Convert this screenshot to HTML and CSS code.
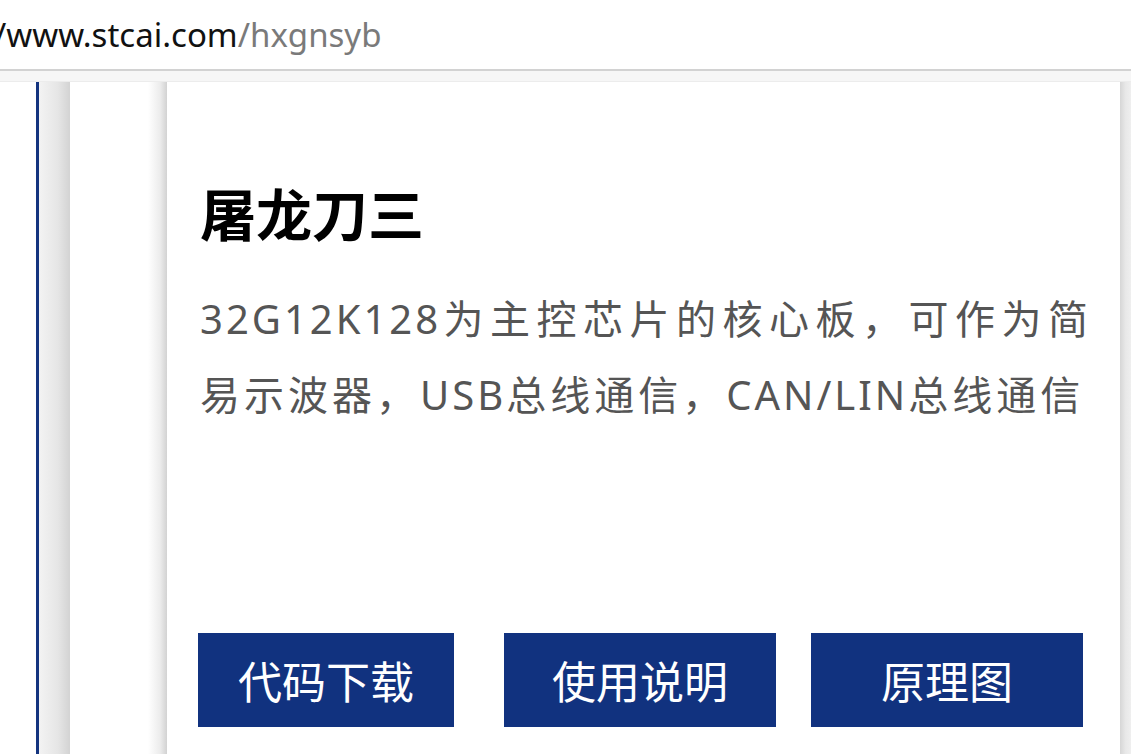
FILE: index.html
```html
<!DOCTYPE html>
<html lang="zh">
<head>
<meta charset="utf-8">
<title>屠龙刀三</title>
<link rel="stylesheet" href="styles.css">
</head>
<body>
<header class="urlbar">
  <div class="url"><span class="host">/www.stcai.com</span><span class="path">/hxgnsyb</span></div>
</header>
<div class="divider"></div>
<main class="page">
  <div class="gutter"></div>
  <div class="rail"></div>
  <div class="spacer"></div>
  <div class="shade-l"></div>
  <section class="card">
    <h1 class="title">屠龙刀三</h1>
    <p class="desc"><span class="en">32G12K128</span>为主控芯片的核心板，可作为简易示波器，<span class="en">USB</span>总线通信，<span class="en">CAN/LIN</span>总线通信</p>
    <div class="actions">
      <a class="btn btn-code">代码下载</a>
      <a class="btn btn-manual">使用说明</a>
      <a class="btn btn-schem">原理图</a>
    </div>
  </section>
  <div class="shade-r"></div>
</main>
</body>
</html>
```
FILE: styles.css
```css
html, body {
  margin: 0;
  padding: 0;
  background: #ffffff;
  overflow: hidden;
}
body {
  width: 1131px;
  height: 754px;
  font-family: "Noto Sans", "Noto Sans CJK SC", sans-serif;
}
.urlbar {
  height: 69px;
  background: #fff;
  display: flex;
  align-items: center;
  overflow: hidden;
}
.url {
  font-family: "Noto Sans", sans-serif;
  font-size: 33px;
  line-height: 1;
  text-indent: -6px;
  padding-top: 0;
  white-space: nowrap;
}
.host { color: #111; }
.path { color: #7a7a7a; }
.divider {
  height: 10px;
  border-top: 2px solid #d2d2d2;
  background: #f6f6f6;
  border-bottom: 1px solid #ececec;
}
.page {
  display: flex;
  height: 672px;
  background: #fff;
}
.gutter { width: 36px; flex: none; }
.rail {
  width: 3px;
  flex: none;
  background: #14347f;
}
.spacer {
  width: 31px;
  flex: none;
  background: linear-gradient(to right, #f3f3f3, #e6e6e6 60%, #d3d3d3);
}
.shade-l {
  flex: none;
  width: 97px;
  background: linear-gradient(to right, #fff 0, #fff 78px, #ececec 90px, #d2d2d2 97px);
}
.card {
  width: 953px;
  flex: none;
  background: #fff;
  box-sizing: border-box;
  padding: 96px 0 0 33px;
}
.shade-r {
  flex: 1;
  background: linear-gradient(to right, #d6d6d6, #e8e8e8 50%, #efefef);
}
.title {
  margin: 0;
  font-family: "Noto Sans CJK SC", sans-serif;
  font-weight: 700;
  font-size: 56px;
  line-height: 67px;
  color: #000;
}
.desc {
  margin: 35px 0 0;
  font-family: "Noto Sans CJK SC", sans-serif;
  font-size: 40px;
  line-height: 75px;
  letter-spacing: 4px;
  color: #555;
  width: 892px;
  text-align: justify;
}
.desc .en {
  font-family: "Noto Sans", sans-serif;
  font-size: 40px;
  letter-spacing: 3px;
}
.actions {
  display: flex;
  margin: 201px 0 0 -2px;
}
.btn {
  display: flex;
  align-items: center;
  justify-content: center;
  height: 94px;
  background: #11327f;
  color: #fff;
  font-family: "Noto Sans CJK SC", sans-serif;
  font-size: 44px;
  text-decoration: none;
  flex: none;
}
.btn-code { width: 256px; }
.btn-manual { width: 272px; margin-left: 50px; }
.btn-schem { width: 272px; margin-left: 35px; }
```
